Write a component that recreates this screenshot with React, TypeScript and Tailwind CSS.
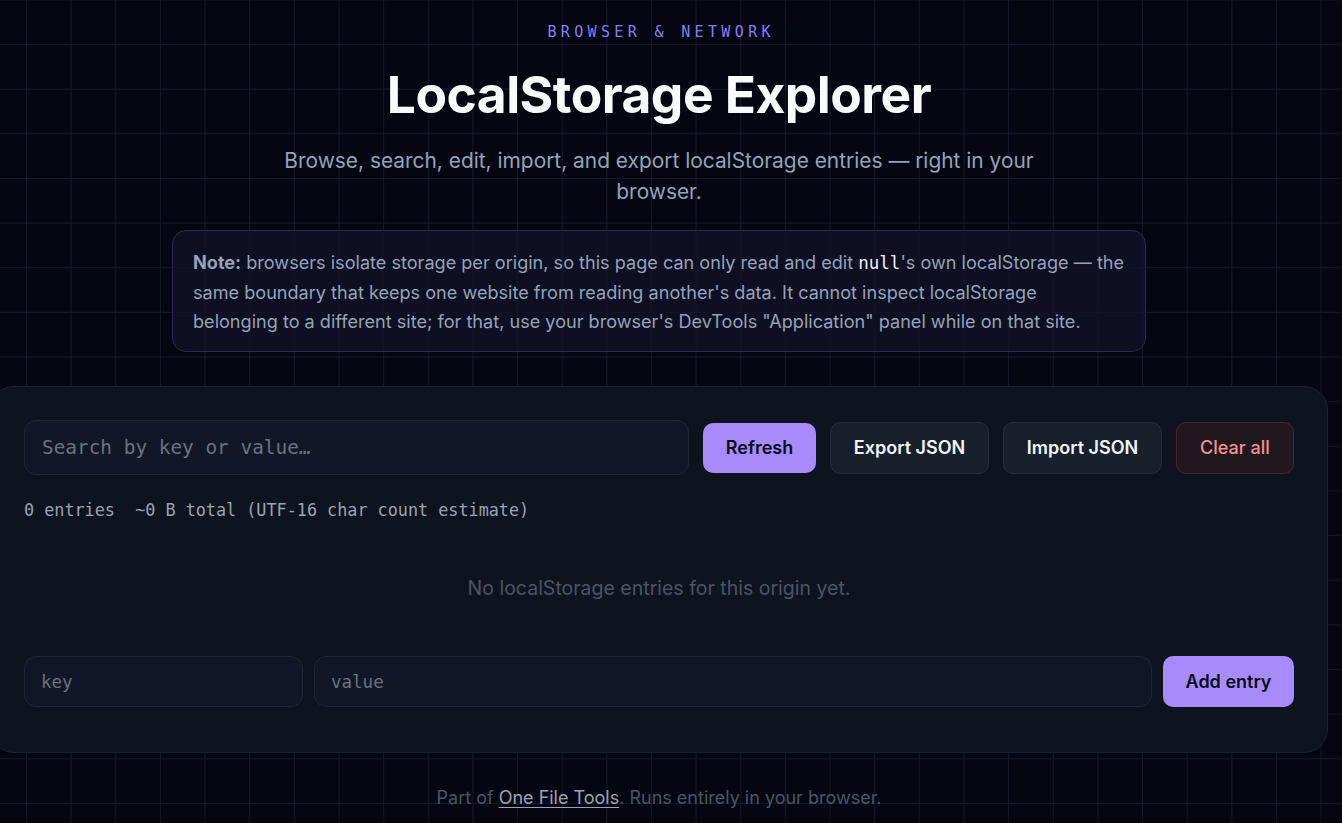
import React from "react";

const mono = "font-['DejaVu_Sans_Mono','Liberation_Mono',monospace]";
const sans = "font-['Inter','Noto_Sans',sans-serif]";

export default function App() {
  return (
    <div
      className={`min-h-screen w-full bg-[#040712] ${sans} bg-[linear-gradient(to_right,#141929_1px,transparent_1px),linear-gradient(to_bottom,#141929_1px,transparent_1px)] bg-[size:44.65px_44.65px] bg-[position:26px_44px]`}
    >
      <div className="flex w-[1318px] flex-col items-center pt-[22px]">
        <div
          className={`${mono} h-[20px] text-[15px] leading-[20px] tracking-[0.29em] text-[#8b7cf6] pl-[0.29em]`}
        >
          BROWSER &amp; NETWORK
        </div>
        <h1 className="mt-[24px] h-[57px] text-[51.5px] font-bold leading-[57px] tracking-[-0.01em] text-[#f8fafc]">
          LocalStorage Explorer
        </h1>
        <p className="mt-[22px] max-w-[800px] text-center text-[20.9px] leading-[31px] text-[#94a3b8]">
          Browse, search, edit, import, and export localStorage entries — right in your browser.
        </p>
        <div className="mt-[23px] w-[974px] rounded-[14px] border border-[#2c2850] bg-[#12122a]/70 px-[20px] pt-[17px] pb-[15px] text-[18.1px] leading-[29px] text-[#94a3b8]">
          <strong className="font-bold text-[#94a3b8]">Note:</strong> browsers isolate storage per
          origin, so this page can only read and edit{" "}
          <code className={`${mono} text-[17.5px] text-[#f1f5f9]`}>null</code>'s own localStorage — the
          same boundary that keeps one website from reading another's data. It cannot inspect
          localStorage belonging to a different site; for that, use your browser's DevTools
          "Application" panel while on that site.
        </div>

        <div className="mx-[-10px] mt-[34px] w-[1338px] rounded-[24px] border border-[#1c2230] bg-[#0e1320] px-[33px] pt-[33px] pb-[45px]">
          <div className="flex items-center gap-[14px]">
            <input
              placeholder="Search by key or value…"
              className={`${mono} h-[55px] flex-1 rounded-[12px] border border-[#1f2635] bg-[#111726] px-[17px] text-[19.4px] text-[#e5e7eb] placeholder:text-[#6b7280] outline-none`}
            />
            <button className="h-[50px] w-[113px] rounded-[10px] bg-[#a78bfa] text-[18px] font-semibold text-[#0c0a1a]">
              Refresh
            </button>
            <button className="h-[52px] w-[159px] rounded-[10px] border border-[#252d3a] bg-[#18202c] text-[18px] font-semibold text-[#f1f5f9]">
              Export JSON
            </button>
            <button className="h-[52px] w-[159px] rounded-[10px] border border-[#252d3a] bg-[#18202c] text-[18px] font-semibold text-[#f1f5f9]">
              Import JSON
            </button>
            <button className="h-[52px] w-[118px] rounded-[10px] border border-[#51242c] bg-[#21171f] text-[18px] font-medium text-[#f39092]">
              Clear all
            </button>
          </div>

          <div className={`${mono} mt-[23px] text-[16.8px] leading-[24px] text-[#9ca3af] whitespace-pre`}>
            0 entries  ~0 B total (UTF-16 char count estimate)
          </div>

          <div className="pt-[53px] pb-[55px] text-center text-[19.5px] leading-[26px] text-[#4b5563]">
            No localStorage entries for this origin yet.
          </div>

          <div className="flex items-center gap-[11px]">
            <input
              placeholder="key"
              className={`${mono} h-[51px] w-[279px] rounded-[12px] border border-[#1f2635] bg-[#111726] px-[16px] text-[17.5px] text-[#e5e7eb] placeholder:text-[#6b7280] outline-none`}
            />
            <input
              placeholder="value"
              className={`${mono} h-[51px] flex-1 rounded-[12px] border border-[#1f2635] bg-[#111726] px-[16px] text-[17.5px] text-[#e5e7eb] placeholder:text-[#6b7280] outline-none`}
            />
            <button className="h-[51px] w-[131px] rounded-[10px] bg-[#a78bfa] text-[18px] font-semibold text-[#0c0a1a]">
              Add entry
            </button>
          </div>
        </div>

        <footer className="mt-[33px] pb-[12px] text-[18px] leading-[24px] text-[#4b5563]">
          Part of{" "}
          <a href="#" className="text-[#9ca3af] underline underline-offset-[3px]">
            One File Tools
          </a>
          . Runs entirely in your browser.
        </footer>
      </div>
    </div>
  );
}
